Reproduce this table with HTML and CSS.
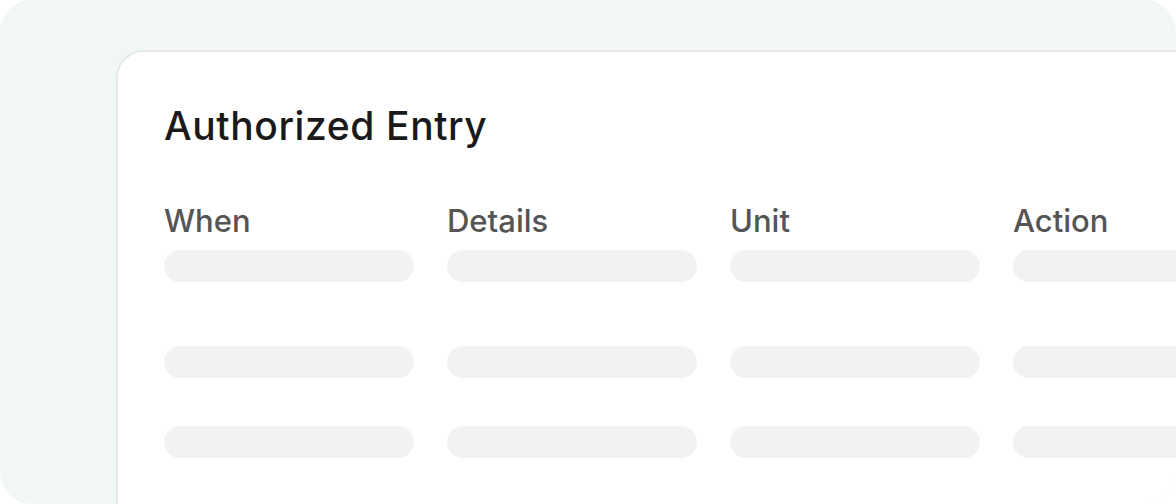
FILE: index.html
```html
<!DOCTYPE html>
<html>
<head>
<meta charset="utf-8">
<link rel="stylesheet" href="styles.css">
</head>
<body>
<div class="frame">
  <div class="card">
    <h1 class="title">Authorized Entry</h1>
    <div class="grid">
      <div class="head">When</div>
      <div class="head">Details</div>
      <div class="head">Unit</div>
      <div class="head">Action</div>
      <div class="bar"></div><div class="bar"></div><div class="bar"></div><div class="bar"></div>
      <div class="bar row2"></div><div class="bar row2"></div><div class="bar row2"></div><div class="bar row2"></div>
      <div class="bar row3"></div><div class="bar row3"></div><div class="bar row3"></div><div class="bar row3"></div>
    </div>
  </div>
</div>
</body>
</html>
```
FILE: styles.css
```css
html, body {
  margin: 0;
  padding: 0;
  background: #ffffff;
}
.frame {
  width: 1176px;
  height: 504px;
  box-sizing: border-box;
  background: #f1f6f6;
  border-radius: 32px;
  padding: 50px 0 0 116px;
  overflow: hidden;
  font-family: Inter, "Noto Sans", sans-serif;
}
.card {
  width: 1300px;
  height: 600px;
  box-sizing: border-box;
  background: #ffffff;
  border: 2px solid #e8eaea;
  border-top-left-radius: 28px;
  padding: 0 0 0 46px;
}
.title {
  margin: 0;
  padding-top: 50px;
  font-size: 39px;
  line-height: 48px;
  font-weight: 500;
  color: #1a1a1a;
  letter-spacing: 0.6px;
}
.grid {
  display: grid;
  grid-template-columns: repeat(4, 250px);
  column-gap: 33px;
  margin-top: 53px;
}
.head {
  font-size: 31px;
  line-height: 36px;
  font-weight: 500;
  color: #555555;
}
.bar {
  height: 32px;
  border-radius: 16px;
  background: #f2f2f2;
  margin-top: 11px;
}
.row2 { margin-top: 64px; }
.row3 { margin-top: 48px; }
```
